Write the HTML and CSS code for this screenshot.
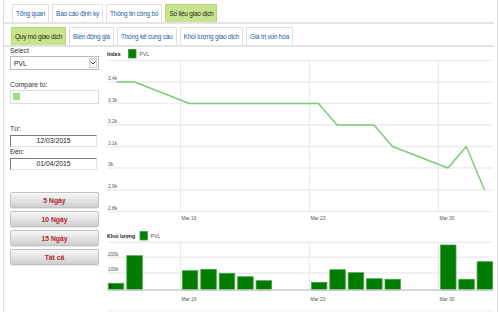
FILE: index.html
```html
<!DOCTYPE html>
<html lang="vi">
<head>
<meta charset="utf-8">
<title>Số liệu giao dịch - PVL</title>
<link rel="stylesheet" href="styles.css">
</head>
<body>
<div class="page">
  <nav class="tabs tabs-main">
    <a class="tab">Tổng quan</a>
    <a class="tab">Báo cáo định kỳ</a>
    <a class="tab">Thông tin công bố</a>
    <a class="tab active">Số liệu giao dịch</a>
  </nav>
  <nav class="tabs tabs-sub">
    <a class="tab active">Quy mô giao dịch</a>
    <a class="tab">Biến động giá</a>
    <a class="tab">Thống kê cung cầu</a>
    <a class="tab">Khối lượng giao dịch</a>
    <a class="tab">Giá trị vốn hóa</a>
  </nav>
  <main class="content">
    <aside class="filters">
      <div class="lbl">Select</div>
      <div class="select">
        <span class="select-text">PVL</span>
        <span class="select-arrow"><svg width="6" height="4" viewBox="0 0 6 4"><path d="M0.5 0.5 L3 3 L5.5 0.5" fill="none" stroke="#444" stroke-width="1"/></svg></span>
      </div>
      <div class="lbl lbl-compare">Compare to:</div>
      <div class="compare"><span class="swatch"></span></div>
      <div class="lbl lbl-from">Từ:</div>
      <div class="date">12/03/2015</div>
      <div class="lbl lbl-to">Đến:</div>
      <div class="date">01/04/2015</div>
      <div class="buttons">
        <button class="btn">5 Ngày</button>
        <button class="btn">10 Ngày</button>
        <button class="btn">15 Ngày</button>
        <button class="btn">Tất cả</button>
      </div>
    </aside>
    <svg class="charts" width="392" height="265" viewBox="104 47 392 265">
      <!-- Index chart -->
      <text x="107" y="56" class="ttl">Index</text>
      <rect x="128.5" y="49.5" width="7.5" height="8.5" fill="#008000" stroke="#3d9b3d" stroke-width="0.8"/>
      <text x="139.5" y="55.8" class="lg">PVL</text>
      <g class="grid">
        <line x1="107" y1="60.5" x2="493" y2="60.5"/>
        <line x1="107" y1="82" x2="493" y2="82"/>
        <line x1="107" y1="103.5" x2="493" y2="103.5"/>
        <line x1="107" y1="125" x2="493" y2="125"/>
        <line x1="107" y1="146.5" x2="493" y2="146.5"/>
        <line x1="107" y1="168" x2="493" y2="168"/>
        <line x1="107" y1="190" x2="493" y2="190"/>
        <line x1="107" y1="211.5" x2="493" y2="211.5"/>
      </g>
      <g class="vgrid">
        <line x1="180.7" y1="60.5" x2="180.7" y2="212"/>
        <line x1="309.3" y1="60.5" x2="309.3" y2="212"/>
        <line x1="438.3" y1="60.5" x2="438.3" y2="212"/>
      </g>
      <g class="ylab">
        <text x="108" y="80.3">3.4k</text>
        <text x="108" y="101.8">3.3k</text>
        <text x="108" y="123.3">3.2k</text>
        <text x="108" y="144.8">3.1k</text>
        <text x="108" y="166.3">3k</text>
        <text x="108" y="188.3">2.9k</text>
        <text x="108" y="209.8">2.8k</text>
      </g>
      <g class="xlab">
        <text x="181.5" y="220">Mar 16</text>
        <text x="310.5" y="220">Mar 23</text>
        <text x="439.5" y="220">Mar 30</text>
      </g>
      <polyline class="line" points="116.5,82 134.5,82 189.5,103.5 300,103.5 318.5,103.5 337,125 374,125 392.5,146.5 448,168 466.3,146.5 484.5,190"/>

      <!-- Volume chart -->
      <text x="107" y="237.5" class="ttl">Khối lượng</text>
      <rect x="140" y="231.5" width="7.5" height="8.5" fill="#008000" stroke="#3d9b3d" stroke-width="0.8"/>
      <text x="150.5" y="237.8" class="lg">PVL</text>
      <g class="grid">
        <line x1="107" y1="242.3" x2="493" y2="242.3"/>
        <line x1="107" y1="257.3" x2="493" y2="257.3"/>
        <line x1="107" y1="273" x2="493" y2="273"/>
      </g>
      <g class="vgrid">
        <line x1="180.7" y1="242.3" x2="180.7" y2="290"/>
        <line x1="309.3" y1="242.3" x2="309.3" y2="290"/>
        <line x1="438.3" y1="242.3" x2="438.3" y2="290"/>
      </g>
      <g class="bars">
        <rect x="108.3" y="283.3" width="15.5" height="6.7"/>
        <rect x="126.8" y="255.7" width="15.5" height="34.3"/>
        <rect x="182.3" y="270.7" width="15.5" height="19.3"/>
        <rect x="200.8" y="269.3" width="15.5" height="20.7"/>
        <rect x="219.2" y="273.3" width="15.5" height="16.7"/>
        <rect x="237.7" y="276.7" width="15.5" height="13.3"/>
        <rect x="256.1" y="280.7" width="15.5" height="9.3"/>
        <rect x="311.4" y="282.3" width="15.5" height="7.7"/>
        <rect x="329.8" y="269.7" width="15.5" height="20.3"/>
        <rect x="348.2" y="272.7" width="15.5" height="17.3"/>
        <rect x="366.6" y="278.7" width="15.5" height="11.3"/>
        <rect x="385" y="279.3" width="15.5" height="10.7"/>
        <rect x="440.5" y="245" width="15.5" height="45"/>
        <rect x="458.8" y="279.3" width="15.5" height="10.7"/>
        <rect x="477.1" y="261.7" width="15.5" height="28.3"/>
      </g>
      <line class="axis" x1="107" y1="290" x2="493" y2="290"/>
      <g class="ylab">
        <text x="108" y="255.5">200k</text>
        <text x="108" y="271.2">100k</text>
        <text x="109" y="288.3" class="zero">0</text>
      </g>
      <g class="xlab">
        <text x="181.5" y="300.5">Mar 16</text>
        <text x="310.5" y="300.5">Mar 23</text>
        <text x="439.5" y="300.5">Mar 30</text>
      </g>
      <line class="foot" x1="107" y1="311" x2="493" y2="311"/>
    </svg>
  </main>
</div>
</body>
</html>
```
FILE: styles.css
```css
* { box-sizing: border-box; }
html, body { margin: 0; padding: 0; background: #fff; }
body {
  width: 500px;
  height: 312px;
  overflow: hidden;
  font-family: "Liberation Sans", Arial, sans-serif;
}
.page {
  margin-left: 3px;
  width: 495px;
  height: 312px;
  border-left: 1px solid #d9dee9;
  border-right: 1px solid #d9dee9;
}
.tabs {
  display: flex;
  gap: 3px;
  margin-right: 3px;
  border-bottom: 2px solid #e4e4e4;
}
.tabs-main { padding: 4px 0 0 8px; }
.tabs-sub { padding: 3px 0 0 7px; }
.tab {
  height: 18px;
  padding: 0 3px;
  display: flex;
  align-items: center;
  font-size: 6.5px;
  letter-spacing: -0.22px;
  color: #2c5d9f;
  background: #fff;
  border: 1px solid #e0e0e0;
  border-bottom: none;
  white-space: nowrap;
}
.tab.active {
  background: #c9e48f;
  border-color: #b8d77a;
  color: #1e2a12;
}
.content {
  display: flex;
  align-items: flex-start;
  gap: 5px;
  padding-left: 6px;
}
.filters {
  width: 89px;
  display: flex;
  flex-direction: column;
}
.lbl {
  font-size: 6.8px;
  line-height: 8px;
  color: #333;
  margin-bottom: 1px;
}
.lbl-compare { margin-top: 11px; }
.lbl-from { margin-top: 21px; margin-bottom: 2px; }
.lbl-to { margin-top: 1px; margin-bottom: 2px; }
.select {
  height: 14px;
  border: 1px solid #b9b9b9;
  display: flex;
  align-items: center;
  justify-content: space-between;
  padding: 0 1px 0 3px;
  font-size: 6.8px;
  color: #222;
  background: #fff;
}
.select-arrow {
  width: 8px;
  height: 10px;
  border: 1px solid #cfcfcf;
  background: #f3f3f3;
  display: flex;
  align-items: center;
  justify-content: center;
}
.select-arrow svg { display: block; }
.compare {
  height: 14px;
  border: 1px solid #dcdcdc;
  padding: 2px 0 0 2px;
}
.swatch {
  display: block;
  width: 7px;
  height: 7px;
  background: #a6d98c;
}
.date {
  width: 87px;
  height: 12px;
  border-top: 1px solid #7a7a7a;
  border-left: 1px solid #7a7a7a;
  border-right: 1px solid #e2e2e2;
  border-bottom: 1px solid #e2e2e2;
  font-size: 6.8px;
  line-height: 10px;
  text-align: center;
  color: #222;
}
.buttons {
  margin-top: 22px;
  display: flex;
  flex-direction: column;
  gap: 3px;
}
.btn {
  height: 16px;
  width: 89px;
  padding: 0;
  border: 1px solid #c2c2c2;
  border-radius: 2px;
  background: linear-gradient(#f7f7f7, #e4e4e4 50%, #cfcfcf);
  font-family: "Liberation Sans", Arial, sans-serif;
  font-size: 6.8px;
  font-weight: bold;
  color: #b3262a;
  box-shadow: 0 1px 0 #e8e8e8;
}
.charts {
  display: block;
  font-family: "Liberation Sans", Arial, sans-serif;
}
.charts .ttl { font-size: 5.2px; font-weight: bold; fill: #222; }
.charts .lg { font-size: 5.2px; fill: #555; }
.charts .grid line { stroke: #ececec; stroke-width: 1.4; }
.charts .vgrid line { stroke: #e3e3e3; stroke-width: 0.9; }
.charts .ylab text { font-size: 4.8px; fill: #555; }
.charts .ylab .zero { fill: #111; }
.charts .xlab text { font-size: 4.8px; fill: #555; }
.charts .line { fill: none; stroke: #7fc97a; stroke-width: 1.5; stroke-linejoin: round; }
.charts .bars rect { fill: #007d00; stroke: #45a145; stroke-width: 0.8; }
.charts .axis { stroke: #cdcdcd; stroke-width: 1.5; }
.charts .foot { stroke: #efefef; stroke-width: 1; }
```
